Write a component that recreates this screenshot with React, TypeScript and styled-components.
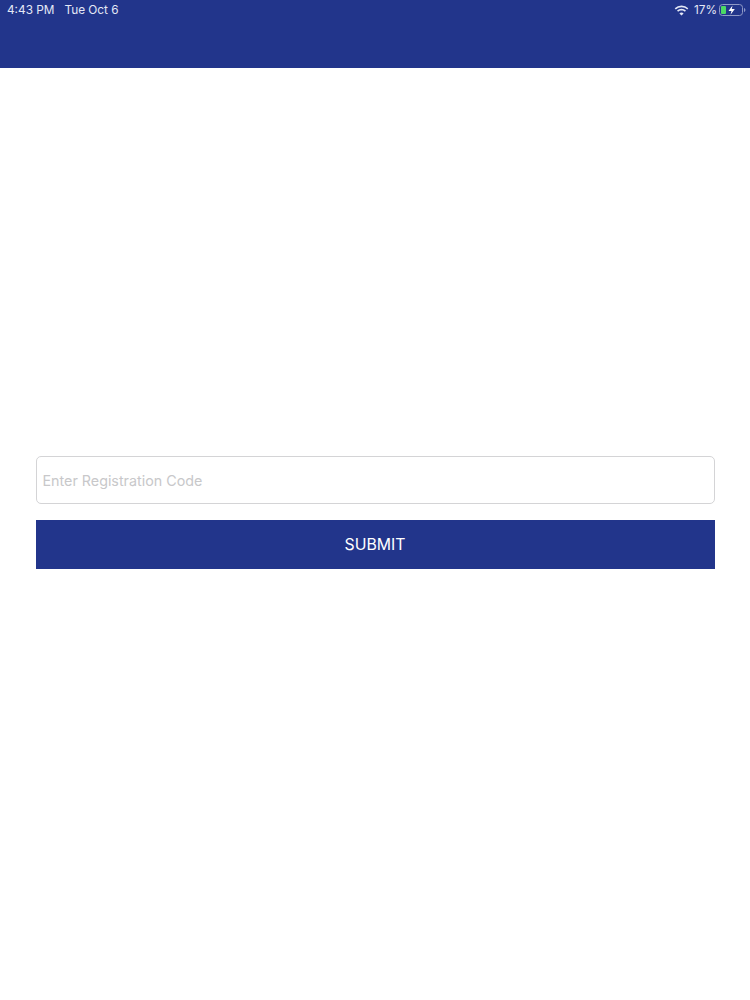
import React from 'react'
import styled, { createGlobalStyle } from 'styled-components'

const GlobalStyle = createGlobalStyle`
  html, body {
    margin: 0;
    padding: 0;
    background: #fff;
  }
  * {
    box-sizing: border-box;
  }
`

const Page = styled.div`
  width: 750px;
  height: 1000px;
  display: flex;
  flex-direction: column;
  font-family: Inter, 'Liberation Sans', sans-serif;
  background: #fff;
`

const Header = styled.header`
  height: 68px;
  flex: none;
  background: #22358b;
  color: #e4e8f6;
`

const StatusBar = styled.div`
  height: 20px;
  padding: 0 4px 0 7px;
  display: flex;
  align-items: center;
  justify-content: space-between;
  font-size: 11.8px;
`

const StatusGroup = styled.div`
  display: flex;
  align-items: center;
`

const DateLabel = styled.span`
  margin-left: 10px;
`

const BatteryLevel = styled.span`
  margin: 0 2px 0 5px;
`

const Content = styled.main`
  padding: 388px 35.5px 0 35.5px;
  display: flex;
  flex-direction: column;
  gap: 16px;
`

const CodeInput = styled.input`
  height: 48px;
  width: 100%;
  border: 1px solid #d4d4d6;
  border-radius: 5px;
  padding: 0 6px;
  background: #fff;
  font-family: inherit;
  font-size: 14.3px;
  outline: none;

  &::placeholder {
    color: #c8c8ca;
    opacity: 1;
  }
`

const SubmitButton = styled.button`
  height: 49px;
  width: 100%;
  border: none;
  background: #22358b;
  color: #fff;
  font-family: inherit;
  font-size: 15.8px;
  padding: 0;
`

const WifiIcon = () => (
  <svg width="15" height="11" viewBox="0 0 15 11">
    <path d="M7.5 2.2c2.2 0 4.2.9 5.7 2.3l1.1-1.2A9.9 9.9 0 0 0 7.5.5 9.9 9.9 0 0 0 .7 3.3l1.1 1.2a8.2 8.2 0 0 1 5.7-2.3z" fill="currentColor" />
    <path d="M7.5 5.4c1.3 0 2.5.5 3.4 1.3l1.1-1.2a6.6 6.6 0 0 0-9 0l1.1 1.2c.9-.8 2.1-1.3 3.4-1.3z" fill="currentColor" />
    <path d="M7.5 7.6c-.8 0-1.5.3-2.1.8l2.1 2.2 2.1-2.2c-.6-.5-1.3-.8-2.1-.8z" fill="currentColor" />
  </svg>
)

const BatteryIcon = () => (
  <svg width="27" height="12" viewBox="0 0 27 12">
    <rect x="0.5" y="0.5" width="23" height="11" rx="3" fill="none" stroke="#8f99c6" strokeWidth="1" />
    <rect x="2" y="2" width="5" height="8" rx="1" fill="#4cd964" />
    <path d="M25 4v4c.8-.2 1.4-1 1.4-2s-.6-1.8-1.4-2z" fill="#8f99c6" />
    <path d="M13.5 1.5 9.5 7h3l-1 3.8L15.8 5h-3z" fill="#fff" />
  </svg>
)

const App: React.FC = () => {
  return (
    <Page>
      <GlobalStyle />
      <Header>
        <StatusBar>
          <StatusGroup>
            <span>4:43 PM</span>
            <DateLabel>Tue Oct 6</DateLabel>
          </StatusGroup>
          <StatusGroup>
            <WifiIcon />
            <BatteryLevel>17%</BatteryLevel>
            <BatteryIcon />
          </StatusGroup>
        </StatusBar>
      </Header>
      <Content>
        <CodeInput placeholder="Enter Registration Code" />
        <SubmitButton>SUBMIT</SubmitButton>
      </Content>
    </Page>
  )
}

export default App
